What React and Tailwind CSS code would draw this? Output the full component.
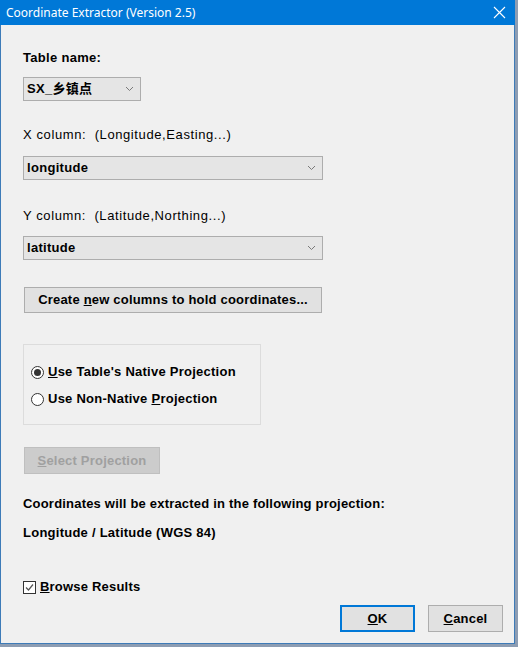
import React, { useState } from 'react';

const sans = { fontFamily: '"Liberation Sans", Arial, "Noto Sans CJK SC", sans-serif' };

function Chevron() {
    return (
        <svg width="9" height="6" viewBox="0 0 9 6" className="shrink-0">
            <polyline points="1,1 4.5,4.5 8,1" fill="none" stroke="#7a7a7a" strokeWidth="1" />
        </svg>
    );
}

function Combo({ value, width }) {
    return (
        <div className={`flex items-center justify-between h-[24px] border border-[#adadad] bg-[#e5e5e5] pl-[3px] pr-[6px] ${width}`}>
            <span className="font-bold text-[13px] tracking-[0.3px] text-black">{value}</span>
            <Chevron />
        </div>
    );
}

function Radio({ checked, children, onClick }) {
    return (
        <div className="flex items-center gap-[4px] cursor-default" onClick={onClick}>
            <span className="w-[13px] h-[13px] rounded-full border border-[#333333] bg-white flex items-center justify-center">
                {checked && <span className="w-[7px] h-[7px] rounded-full bg-[#333333]" />}
            </span>
            <span className="font-bold text-[13px] tracking-[0.25px] leading-[16px]">{children}</span>
        </div>
    );
}

export default function App() {
    const [native, setNative] = useState(true);
    const [browse, setBrowse] = useState(true);

    return (
        <div className="w-[518px] h-[647px] bg-[#8d9db3] overflow-hidden" style={sans}>
            <div className="w-[515px] h-[644px] flex flex-col bg-[#f0f0f0] border border-t-0 border-[#3d7bb8]">
                {/* title bar */}
                <div className="h-[25px] bg-[#0078d7] flex items-center justify-between pl-[6px] pr-[9px] shrink-0 -mx-px">
                    <span className="text-white text-[12px]" style={{ fontFamily: '"Noto Sans", sans-serif' }}>
                        Coordinate Extractor (Version 2.5)
                    </span>
                    <svg width="13" height="13" viewBox="0 0 13 13">
                        <path d="M1 1 L12 12 M12 1 L1 12" stroke="#ffffff" strokeWidth="1.1" />
                    </svg>
                </div>

                <div className="flex flex-col pl-[22px] pr-[11px] text-black">
                    <div className="mt-[25px] font-bold text-[13px] tracking-[0.3px] leading-[16px]">Table name:</div>
                    <div className="mt-[11px]">
                        <Combo value="SX_乡镇点" width="w-[118px]" />
                    </div>

                    <div className="mt-[26px] text-[13px] tracking-[0.6px] leading-[16px]">X column:&nbsp; (Longitude,Easting...)</div>
                    <div className="mt-[13px]">
                        <Combo value="longitude" width="w-[300px]" />
                    </div>

                    <div className="mt-[28px] text-[13px] tracking-[0.6px] leading-[16px]">Y column:&nbsp; (Latitude,Northing...)</div>
                    <div className="mt-[12px]">
                        <Combo value="latitude" width="w-[300px]" />
                    </div>

                    <button className="mt-[27px] ml-[1px] w-[298px] h-[26px] border border-[#adadad] bg-[#e1e1e1] font-bold text-[13px] tracking-[0.2px]">
                        Create <u>n</u>ew columns to hold coordinates...
                    </button>

                    {/* projection group */}
                    <div className="mt-[31px] w-[238px] h-[81px] border border-[#dcdcdc] flex flex-col pl-[7px] pt-[19px] gap-[11px]">
                        <Radio checked={native} onClick={() => setNative(true)}>
                            <u>U</u>se Table's Native Projection
                        </Radio>
                        <Radio checked={!native} onClick={() => setNative(false)}>
                            Use Non-Native <u>P</u>rojection
                        </Radio>
                    </div>

                    <button
                        disabled
                        className="mt-[22px] ml-[1px] w-[136px] h-[27px] border border-[#bfbfbf] bg-[#cccccc] text-[#a0a0a0] font-bold text-[13px] tracking-[0.2px]"
                    >
                        <u>S</u>elect Projection
                    </button>

                    <div className="mt-[22px] font-bold text-[13px] tracking-[0.2px] leading-[16px]">
                        Coordinates will be extracted in the following projection:
                    </div>
                    <div className="mt-[13px] font-bold text-[13px] tracking-[0.25px] leading-[16px]">
                        Longitude / Latitude (WGS 84)
                    </div>

                    <div className="mt-[38px] flex items-center gap-[4px] cursor-default" onClick={() => setBrowse(!browse)}>
                        <span className="w-[13px] h-[13px] border border-[#333333] bg-white flex items-center justify-center">
                            {browse && (
                                <svg width="11" height="11" viewBox="0 0 11 11">
                                    <polyline points="2,5.5 4.5,8 9,2.5" fill="none" stroke="#555555" strokeWidth="1.2" />
                                </svg>
                            )}
                        </span>
                        <span className="font-bold text-[13px] tracking-[0.2px] leading-[16px]"><u>B</u>rowse Results</span>
                    </div>

                    <div className="mt-[10px] flex justify-end gap-[13px]">
                        <button className="w-[75px] h-[27px] border-2 border-[#0078d7] bg-[#e1e1e1] font-bold text-[13px] tracking-[0.2px]">
                            <u>O</u>K
                        </button>
                        <button className="w-[75px] h-[27px] border border-[#adadad] bg-[#e1e1e1] font-bold text-[13px] tracking-[0.2px]">
                            <u>C</u>ancel
                        </button>
                    </div>
                </div>
            </div>
        </div>
    );
}
